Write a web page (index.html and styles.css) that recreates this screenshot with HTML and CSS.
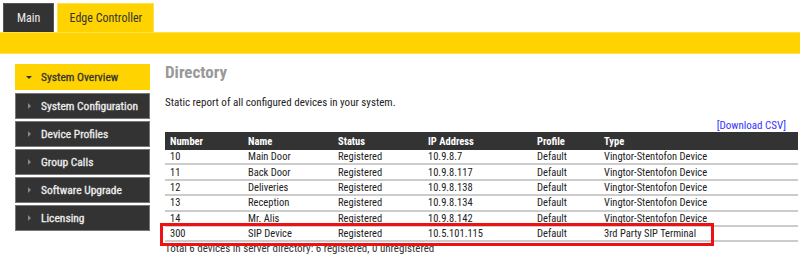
FILE: index.html
```html
<!DOCTYPE html>
<html lang="en">
<head>
  <meta charset="UTF-8">
  <title>Directory</title>
  <link rel="stylesheet" href="styles.css">
</head>
<body>

<div class="tabs">
  <a class="tab" href="#">Main</a>
  <a class="tab active" href="#">Edge Controller</a>
</div>
<div class="bar"></div>

<div class="main">
  <ul class="sidebar">
    <li class="active"><span class="arrow"></span>System Overview</li>
    <li><span class="arrow"></span>System Configuration</li>
    <li><span class="arrow"></span>Device Profiles</li>
    <li><span class="arrow"></span>Group Calls</li>
    <li><span class="arrow"></span>Software Upgrade</li>
    <li><span class="arrow"></span>Licensing</li>
  </ul>

  <div class="content">
    <h2>Directory</h2>
    <p class="intro">Static report of all configured devices in your system.</p>
    <div class="csv"><a href="#">[Download CSV]</a></div>

    <div class="table-wrap">
      <table class="dir">
        <tr>
          <th class="c-num">Number</th>
          <th class="c-name">Name</th>
          <th class="c-status">Status</th>
          <th class="c-ip">IP Address</th>
          <th class="c-prof">Profile</th>
          <th>Type</th>
        </tr>
        <tr><td>10</td><td>Main Door</td><td>Registered</td><td>10.9.8.7</td><td>Default</td><td>Vingtor-Stentofon Device</td></tr>
        <tr><td>11</td><td>Back Door</td><td>Registered</td><td>10.9.8.117</td><td>Default</td><td>Vingtor-Stentofon Device</td></tr>
        <tr><td>12</td><td>Deliveries</td><td>Registered</td><td>10.9.8.138</td><td>Default</td><td>Vingtor-Stentofon Device</td></tr>
        <tr><td>13</td><td>Reception</td><td>Registered</td><td>10.9.8.134</td><td>Default</td><td>Vingtor-Stentofon Device</td></tr>
        <tr><td>14</td><td>Mr. Alis</td><td>Registered</td><td>10.9.8.142</td><td>Default</td><td>Vingtor-Stentofon Device</td></tr>
        <tr><td>300</td><td>SIP Device</td><td>Registered</td><td>10.5.101.115</td><td>Default</td><td>3rd Party SIP Terminal</td></tr>
      </table>
      <p class="total">Total 6 devices in server directory: 6 registered, 0 unregistered</p>
      <!-- red annotation box over the SIP row -->
      <div class="mark"></div>
    </div>
  </div>
</div>

</body>
</html>
```

FILE: styles.css
```css
body {
  margin: 0;
  font-family: "Liberation Sans Narrow", "Roboto Condensed", "DejaVu Sans Condensed", Roboto, sans-serif;
  font-size: 11px;
  color: #222;
  background: #fff;
  overflow: hidden;
}
.tabs {
  display: flex;
  gap: 3px;
  padding: 3px 0 0 3px;
}
.tab {
  display: block;
  height: 29px;
  line-height: 29px;
  padding: 0 13px;
  background: #333;
  color: #eee;
  font-size: 12px;
  text-decoration: none;
  white-space: nowrap;
  box-sizing: border-box;
  border: 1px solid #555;
  border-bottom: none;
}
.tab.active {
  background: #ffd300;
  color: #333;
  border-color: #ffe14d;
  width: 97px;
  text-align: center;
  padding: 0;
}
.bar {
  height: 20px;
  background: #ffd300;
  border-top: 1px solid #ffe14d;
  border-bottom: 1px solid #ffe14d;
}
.main {
  display: flex;
  padding-top: 10px;
}
.sidebar {
  list-style: none;
  margin: 0 0 0 15px;
  padding: 0;
  width: 135px;
  flex-shrink: 0;
}
.sidebar li {
  display: flex;
  align-items: center;
  height: 26px;
  margin-bottom: 2px;
  background: #333;
  color: #eee;
  font-size: 11.5px;
  box-sizing: border-box;
  border: 1px solid #777;
  padding-left: 9px;
  -webkit-text-stroke: 0.3px currentColor;
}
.sidebar li.active {
  background: #ffd300;
  color: #333;
  border-color: #ffd300;
  margin-bottom: 3px;
}
.arrow {
  width: 0;
  height: 0;
  border-top: 3px solid transparent;
  border-bottom: 3px solid transparent;
  border-left: 3px solid #888;
  margin: 0 10px 0 3px;
}
.sidebar li.active .arrow {
  border-left: 3px solid transparent;
  border-right: 3px solid transparent;
  border-top: 3px solid #333;
  border-bottom: none;
  margin: 0 9px 0 1px;
}
.content {
  flex: 1;
  margin: 0 2px 0 15px;
}
h2 {
  margin: -2px 0 0;
  font-size: 17px;
  color: #999;
  line-height: 20px;
}
.intro {
  margin: 14px 0 0;
  line-height: 14px;
}
.csv {
  text-align: right;
  margin-top: 9px;
  padding-right: 12px;
  line-height: 13px;
}
.csv a {
  color: #3333ff;
  text-decoration: none;
}
.table-wrap {
  position: relative;
}
.dir {
  width: 100%;
  border-collapse: collapse;
  font-size: 10.5px;
}
.dir th {
  background: #333;
  color: #fff;
  text-align: left;
  font-weight: bold;
  height: 18px;
  padding: 0 5px;
}
.dir td {
  height: 13.4px;
  padding: 0 5px;
  border-bottom: 2px solid #ccc;
  line-height: 13px;
}
.c-num { width: 68px; }
.c-name { width: 80px; }
.c-status { width: 80px; }
.c-ip { width: 99px; }
.c-prof { width: 57px; }
.mark {
  position: absolute;
  left: -5px;
  top: 91px;
  width: 548px;
  height: 17px;
  border: 3px solid #ee1111;
}
.total {
  margin: 0;
  line-height: 13px;
  color: #333;
}
```
